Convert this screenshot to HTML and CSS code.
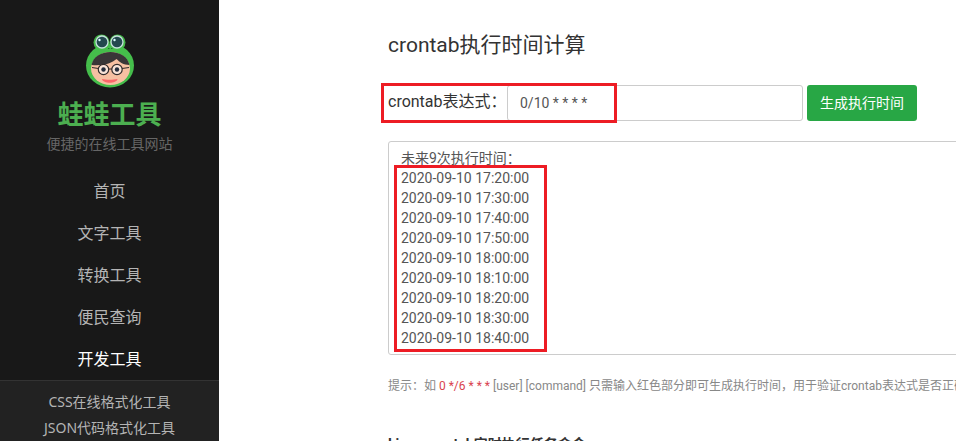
FILE: index.html
```html
<!DOCTYPE html>
<html lang="zh-CN">
<head>
<meta charset="utf-8">
<title>crontab执行时间计算 - 蛙蛙工具</title>
<link rel="stylesheet" href="styles.css">
</head>
<body>
<div class="layout">
  <aside class="sidebar">
    <a class="brand" href="#">
      <svg class="logo" viewBox="0 0 50 54" aria-hidden="true">
        <circle cx="16.500" cy="8.500" r="8" fill="#45b649"/>
        <circle cx="32.500" cy="8.500" r="8" fill="#45b649"/>
        <ellipse cx="25" cy="31.500" rx="24" ry="22" fill="#45be4b"/>
        <circle cx="17" cy="8" r="6" fill="#23484f" stroke="#c5dfdc" stroke-width="1.300"/>
        <circle cx="32" cy="8" r="6" fill="#23484f" stroke="#c5dfdc" stroke-width="1.300"/>
        <circle cx="14.500" cy="6" r="1.200" fill="#dff"/>
        <circle cx="29.500" cy="6" r="1.200" fill="#dff"/>
        <path d="M23 14.500h1.500M26 14.500h1.500" stroke="#246b38" stroke-width="1"/>
        <ellipse cx="25.500" cy="34.500" rx="19.500" ry="16.500" fill="#f7c0a2"/>
        <path d="M6.500 31C8 23 16 18 25.500 18s17.500 5 19 13c-6 0-10-3-13-6-5 4-12 7-25 6z" fill="#393637"/>
        <circle cx="18.500" cy="35.500" r="5.200" fill="#fbe4d8" stroke="#332b2b" stroke-width="1.200"/>
        <circle cx="32" cy="35.500" r="5.200" fill="#fbe4d8" stroke="#332b2b" stroke-width="1.200"/>
        <path d="M7 33.500l6.500 1M23.500 35h3.500M37 34.500l7-1" stroke="#332b2b" stroke-width="1.200"/>
        <circle cx="18.500" cy="35.500" r="2.200" fill="#252d3d"/>
        <circle cx="32" cy="35.500" r="2.200" fill="#252d3d"/>
        <path d="M17 45c4 1 11 1 15.500 0-1 5-14.500 5-15.500 0z" fill="#fb6669"/>
      </svg>
      <span class="brand-name">蛙蛙工具</span>
      <span class="brand-note">便捷的在线工具网站</span>
    </a>
    <nav class="menu">
      <a href="#">首页</a>
      <a href="#">文字工具</a>
      <a href="#">转换工具</a>
      <a href="#">便民查询</a>
      <a class="active" href="#">开发工具</a>
      <div class="submenu">
        <a href="#">CSS在线格式化工具</a>
        <a href="#">JSON代码格式化工具</a>
      </div>
    </nav>
  </aside>
  <main class="main">
    <h1>crontab执行时间计算</h1>
    <form class="query">
      <label for="expression">crontab表达式：</label>
      <input id="expression" type="text" value="0/10 * * * *">
      <button type="button">生成执行时间</button>
      <span class="mark mark-query"></span>
    </form>
    <div class="result">
      <textarea rows="10" readonly aria-label="执行时间">未来9次执行时间：
2020-09-10 17:20:00
2020-09-10 17:30:00
2020-09-10 17:40:00
2020-09-10 17:50:00
2020-09-10 18:00:00
2020-09-10 18:10:00
2020-09-10 18:20:00
2020-09-10 18:30:00
2020-09-10 18:40:00</textarea>
      <span class="mark mark-result"></span>
    </div>
    <p class="hint">提示：如 <span>0 */6 * * *</span> [user] [command] 只需输入红色部分即可生成执行时间，用于验证crontab表达式是否正确</p>
    <h2>Linux crontab定时执行任务命令</h2>
  </main>
</div>
</body>
</html>
```
FILE: styles.css
```css
* {
  box-sizing: border-box;
}

body {
  margin: 0;
  overflow: hidden;
  background: #fff;
  color: #333;
  font: 14px/20px "Noto Sans", "Noto Sans CJK SC", sans-serif;
}

a {
  color: inherit;
  text-decoration: none;
}

.layout {
  display: flex;
  height: 100vh;
}

.sidebar {
  flex: 0 0 219px;
  overflow: hidden;
  background: #181818;
  color: #b4b4b4;
  text-align: center;
}

.brand {
  display: flex;
  flex-direction: column;
  align-items: center;
  padding-top: 34px;
}

.logo {
  width: 50px;
  height: 54px;
}

.brand-name {
  margin-top: 8px;
  color: #4caf50;
  font-size: 26px;
  font-weight: 700;
  line-height: 36px;
}

.brand-note {
  margin-top: 2px;
  color: #666;
}

.menu {
  margin-top: 16px;
}

.menu a {
  display: block;
  font-size: 16px;
  line-height: 42px;
}

.menu .active {
  color: #fff;
}

.submenu {
  padding: 8px 0;
  border-top: 1px solid #333;
  background: #222;
}

.menu .submenu a {
  font-size: 14px;
  line-height: 26px;
}

.main {
  flex: 1;
  min-width: 0;
  padding: 30px 0 0 169px;
  font-family: Roboto, "Noto Sans CJK SC", sans-serif;
}

h1 {
  margin: 0;
  font-size: 21px;
  font-weight: 400;
  line-height: 30px;
}

.query {
  position: relative;
  display: flex;
  margin-top: 25px;
}

label {
  flex: 0 0 119px;
  font-size: 16px;
  line-height: 34px;
  white-space: nowrap;
}

input,
textarea {
  border: 1px solid #ccc;
  border-radius: 3px;
  background: #fff;
  color: #555;
  font: inherit;
}

input {
  width: 296px;
  height: 36px;
  padding: 0 12px;
}

button {
  height: 36px;
  margin-left: 4px;
  padding: 0 13px;
  border: 0;
  border-radius: 3px;
  background: #28a745;
  color: #fff;
  font: inherit;
}

.result {
  position: relative;
  margin-top: 20px;
}

textarea {
  display: block;
  width: calc(100% + 20px);
  padding: 6px 12px;
  overflow: hidden;
  resize: none;
}

.mark {
  position: absolute;
  border: 3px solid #ed1c24;
  pointer-events: none;
}

.mark-query {
  top: -2px;
  left: -7px;
  width: 236px;
  height: 40px;
}

.mark-result {
  top: 24px;
  left: 6px;
  width: 153px;
  height: 187px;
}

.hint {
  margin: 21px 0 0;
  color: #888;
  font-size: 12px;
  white-space: nowrap;
}

.hint span {
  color: #d9434e;
}

h2 {
  margin: 38px 0 0;
  font-size: 14px;
  font-weight: 700;
  line-height: 20px;
}
```
